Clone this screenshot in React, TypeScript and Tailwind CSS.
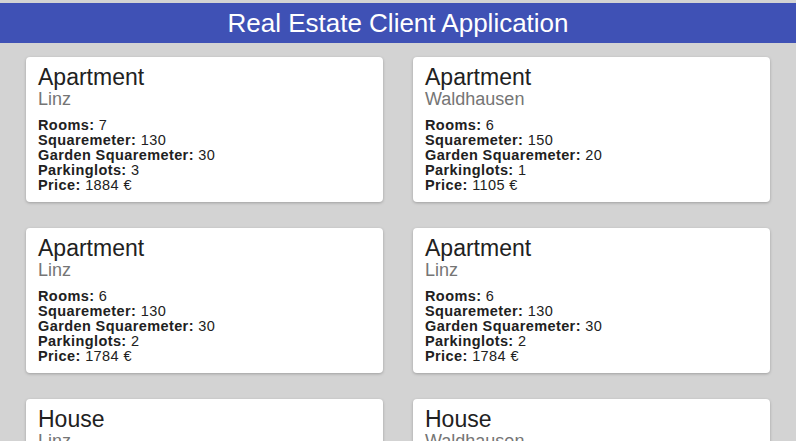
import React from 'react';

type Estate = {
  type: string;
  city: string;
  rooms: number;
  sqm: number;
  garden: number;
  parking: number;
  price: number;
};

const estates: Estate[] = [
  { type: 'Apartment', city: 'Linz', rooms: 7, sqm: 130, garden: 30, parking: 3, price: 1884 },
  { type: 'Apartment', city: 'Waldhausen', rooms: 6, sqm: 150, garden: 20, parking: 1, price: 1105 },
  { type: 'Apartment', city: 'Linz', rooms: 6, sqm: 130, garden: 30, parking: 2, price: 1784 },
  { type: 'Apartment', city: 'Linz', rooms: 6, sqm: 130, garden: 30, parking: 2, price: 1784 },
  { type: 'House', city: 'Linz', rooms: 5, sqm: 180, garden: 200, parking: 2, price: 2400 },
  { type: 'House', city: 'Waldhausen', rooms: 5, sqm: 160, garden: 300, parking: 2, price: 2100 },
];

const EstateCard = ({ e }: { e: Estate }) => (
  <div className="bg-white rounded-[4px] shadow-[0_1px_3px_rgba(0,0,0,0.25)] px-3 pt-2 pb-[8px] h-[145px]">
    <div className="text-[23px] leading-[24px] text-[#212121]">{e.type}</div>
    <div className="text-[18px] leading-[20px] text-[#757575]">{e.city}</div>
    <div className="mt-[8.5px] text-[14.5px] leading-[15px] tracking-[0.4px] text-[#212121]">
      <div><b>Rooms:</b> {e.rooms}</div>
      <div><b>Squaremeter:</b> {e.sqm}</div>
      <div><b>Garden Squaremeter:</b> {e.garden}</div>
      <div><b>Parkinglots:</b> {e.parking}</div>
      <div><b>Price:</b> {e.price} €</div>
    </div>
  </div>
);

export default function App() {
  return (
    <div className="min-h-screen bg-[#d3d3d3] pt-[3px] font-['Liberation_Sans',Arial,sans-serif]">
      <header className="h-10 bg-[#3f51b5] flex items-center justify-center">
        <h1 className="text-white text-[26px] leading-none">Real Estate Client Application</h1>
      </header>
      <main className="grid grid-cols-2 gap-x-[30px] gap-y-[26px] px-[26px] pt-[14px] pb-6">
        {estates.map((e, i) => (
          <EstateCard key={i} e={e} />
        ))}
      </main>
    </div>
  );
}
